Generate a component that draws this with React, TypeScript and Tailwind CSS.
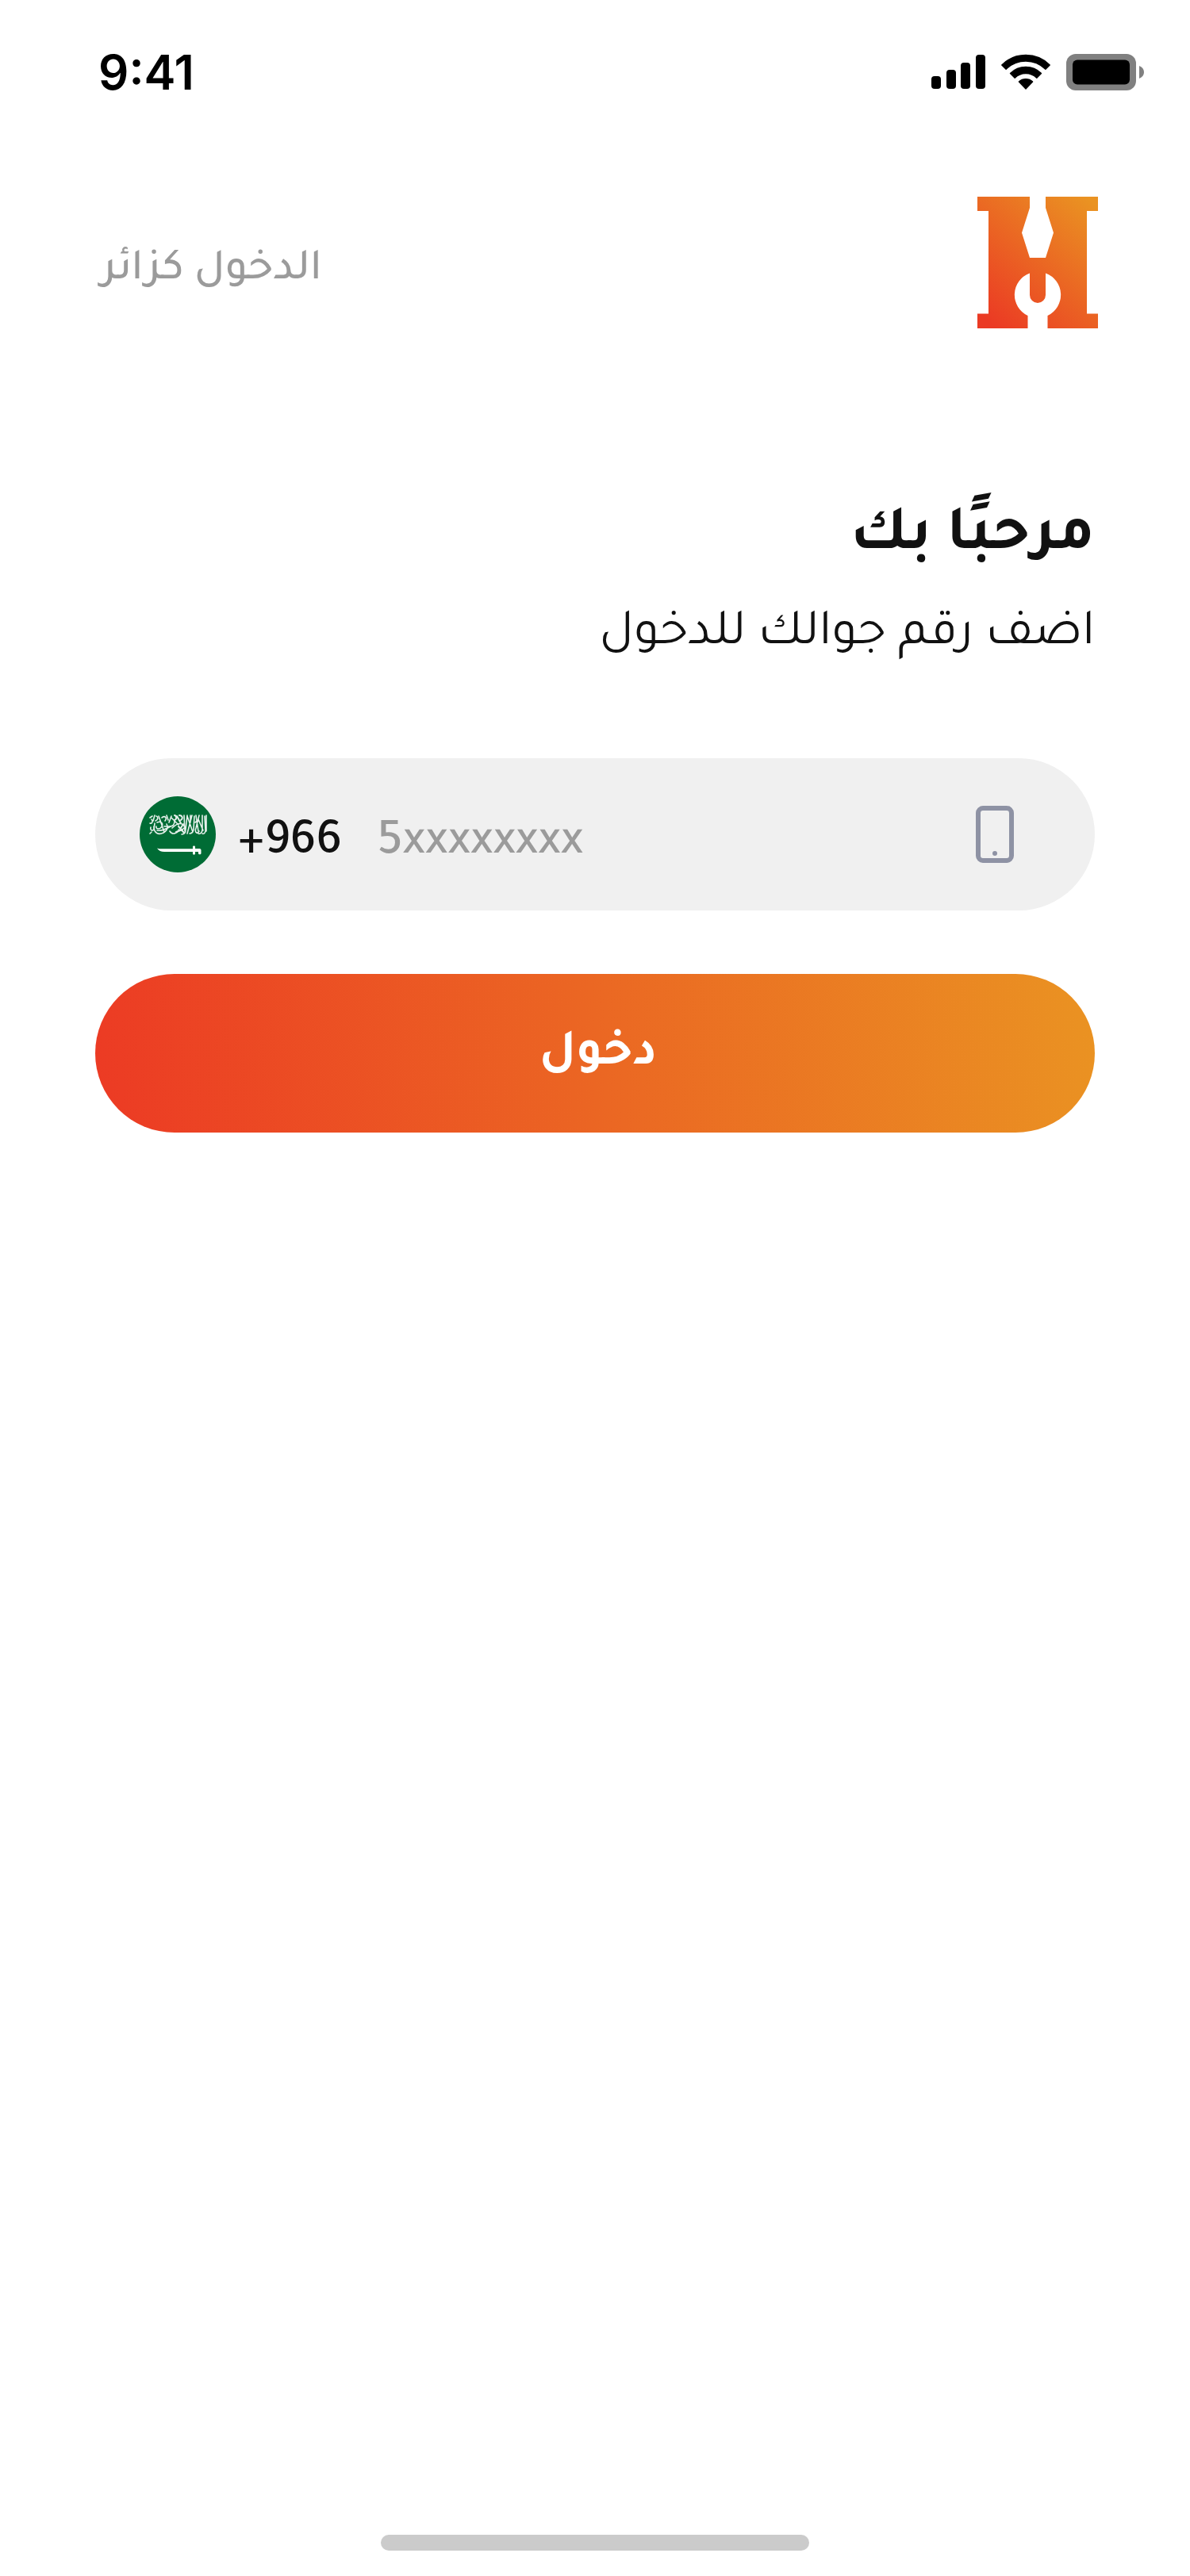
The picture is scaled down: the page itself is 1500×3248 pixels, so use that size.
function SignalIcon() {
  return (
    <svg className="h-11 w-[68px]" viewBox="0 0 68 44" aria-hidden="true">
      <rect x="0" y="27" width="12" height="16" rx="4" />
      <rect x="19" y="19" width="12" height="24" rx="4" />
      <rect x="37" y="10" width="12" height="33" rx="4" />
      <rect x="56" y="0" width="12" height="43" rx="4" />
    </svg>
  );
}

function WifiIcon() {
  return (
    <svg className="h-[46px] w-[62px]" viewBox="0 0 62 46" aria-hidden="true">
      <g strokeWidth="1.4" stroke="black" strokeLinejoin="round">
        <path d="M.8 14a42.800 42.800 0 0 1 60.400 0l-5.300 5.300a35.200 35.200 0 0 0-49.800 0z" />
        <path d="M11.500 24.600a27.600 27.600 0 0 1 39 0l-5.700 5.600a19.500 19.500 0 0 0-27.600 0z" />
        <path d="M22.400 35a13 13 0 0 1 17.200 0L31 44z" />
      </g>
    </svg>
  );
}

function BatteryIcon() {
  return (
    <svg className="h-[46px] w-[98px]" viewBox="0 0 98 46" aria-hidden="true">
      <rect x="0" y="0" width="88" height="46" rx="12" fill="#808080" />
      <rect x="8" y="7.500" width="72" height="31" rx="6" />
      <path d="M92 15c4 1.600 6 4.500 6 8s-2 6.400-6 8z" fill="#808080" />
    </svg>
  );
}

function Logo() {
  return (
    <svg className="h-[166px] w-[152px]" viewBox="0 0 152 166" role="img" aria-label="H">
      <defs>
        <linearGradient id="logo-fill" gradientUnits="userSpaceOnUse" x1="14" y1="158" x2="146" y2="8">
          <stop offset="0" stopColor="#eb3a24" />
          <stop offset="1" stopColor="#ea9322" />
        </linearGradient>
      </defs>
      <path
        fill="url(#logo-fill)"
        d="M0 0H66V14L56 45.500L66 77H86L96 45.500L86 14V0H152V18H138V147.500H152V166H88.500V150A29 29 0 0 0 86 96.500V124A10 10 0 0 1 66 124V96.500A29 29 0 0 0 63.500 150V166H0V147.500H14V18H0Z"
      />
    </svg>
  );
}

function SaudiFlag() {
  return (
    <svg className="size-24 shrink-0" viewBox="0 0 96 96" role="img" aria-label="السعودية">
      <circle cx="48" cy="48" r="48" fill="#006c35" />
      <g fill="none" stroke="#fff" strokeLinecap="round" strokeLinejoin="round" strokeWidth="1.600" opacity=".9">
        <path d="M13 27l3-2M13 34c3 1 4-3 2-5M13 47l2-2M14 39c-1 4 2 5 4 3l1-8M19 24l-2 7M21 25c3 1 2 5-1 6" />
        <path d="M18 38c0 9 6 11 12 8 5-3 6-7 4-11M22 33c5-2 8 1 6 5s-8 4-7 0M24 25l7 20M28 27c4-3 7 0 4 4M22 43c6 1 12-2 17-5" />
        <path d="M31 38h7c4 0 6-3 6-7M34 24l2 6M37 33l3-8M38 44c3 5 9 3 11-1M40 27l9 9M41 40c5-5 10-7 14-4s0 7-6 6" />
        <path d="M44 24c3 1 3 5 0 6M47 25l5 9M50 24c4 0 5 4 2 6M46 45l8-3M49 38l7 8M52 40l3-5" strokeWidth="2" />
        <path d="M56 24l1 20M60 24l-2 18c0 4-2 6-5 6M60 25l7 20M66 24l-6 23M64 24v9M69 25l-1 17c-1 4-3 5-5 5" />
        <path d="M71 24l3 20M75 24l-4 16c-2 6 2 8 4 4M74 29l6 14M79 24v18c0 4-3 6-5 5M82 25l1 18c0 3-2 5-4 4M84 24v20M70 33l4-3" />
      </g>
      <path
        fill="#fff"
        d="M22 65.500L25 66.200H67V63.500C67 62 70 62 70 63.500V66H75.500C77 66 77.500 67 77.500 68V72C77.500 73.800 74 73.800 74 72V70H70V72.500C70 74 67 74 67 72.500V70H31C27 70 24 68.500 22 65.500Z"
      />
    </svg>
  );
}

function PhoneIcon() {
  return (
    <svg className="h-[72px] w-12 shrink-0" viewBox="0 0 48 72" aria-hidden="true">
      <rect x="3" y="3" width="42" height="66" rx="6" fill="none" stroke="#8e92a4" strokeWidth="6" />
      <circle cx="24" cy="60" r="3" fill="#8e92a4" />
    </svg>
  );
}

function StatusBar() {
  return (
    <div dir="ltr" className="flex items-center justify-between pt-14 pr-[58px] pl-[124px]">
      <time className="font-['Inter',sans-serif] text-[60px] leading-[70px] font-semibold text-black">9:41</time>
      <div className="flex items-center gap-5">
        <SignalIcon />
        <WifiIcon />
        <BatteryIcon />
      </div>
    </div>
  );
}

export default function App() {
  return (
    <div
      dir="rtl"
      lang="ar"
      className="flex min-h-screen flex-col bg-white font-['Tajawal','Cairo','Noto_Sans_Arabic','DejaVu_Sans',sans-serif] text-[#111111]"
    >
      <StatusBar />
      <header className="flex items-center justify-between pt-[122px] pr-[116px] pl-32">
        <Logo />
        <a href="#guest" className="pt-6 text-[56px] leading-[68px] font-medium text-[#9b9b9b]">
          الدخول كزائر
        </a>
      </header>
      <main className="px-[120px] pt-[218px]">
        <h1 className="text-[80px] leading-[96px] font-bold">مرحبًا بك</h1>
        <p className="mt-[34px] text-[64px] leading-[80px]">اضف رقم جوالك للدخول</p>
        <form className="mt-[114px] flex flex-col gap-20">
          <div dir="ltr" className="flex h-48 items-center rounded-full bg-[#f0f0f0] pr-[102px] pl-14">
            <SaudiFlag />
            <label htmlFor="phone" className="ml-7 pt-7 text-[64px] leading-[76px] font-medium">
              +966
            </label>
            <input
              id="phone"
              type="tel"
              placeholder="5xxxxxxxx"
              className="ml-11 min-w-0 flex-1 bg-transparent pt-7 text-[64px] leading-[76px] font-medium outline-none placeholder:text-[#9b9b9b]"
            />
            <PhoneIcon />
          </div>
          <button
            type="button"
            className="h-[200px] rounded-full bg-[linear-gradient(81deg,#ec3a24,#ea9322)] pt-2 pl-2 text-[64px] leading-[76px] font-bold text-white"
          >
            دخول
          </button>
        </form>
      </main>
      <div className="mx-auto mt-auto mb-8 h-5 w-[540px] rounded-full bg-[#cbcbcb]" />
    </div>
  );
}
